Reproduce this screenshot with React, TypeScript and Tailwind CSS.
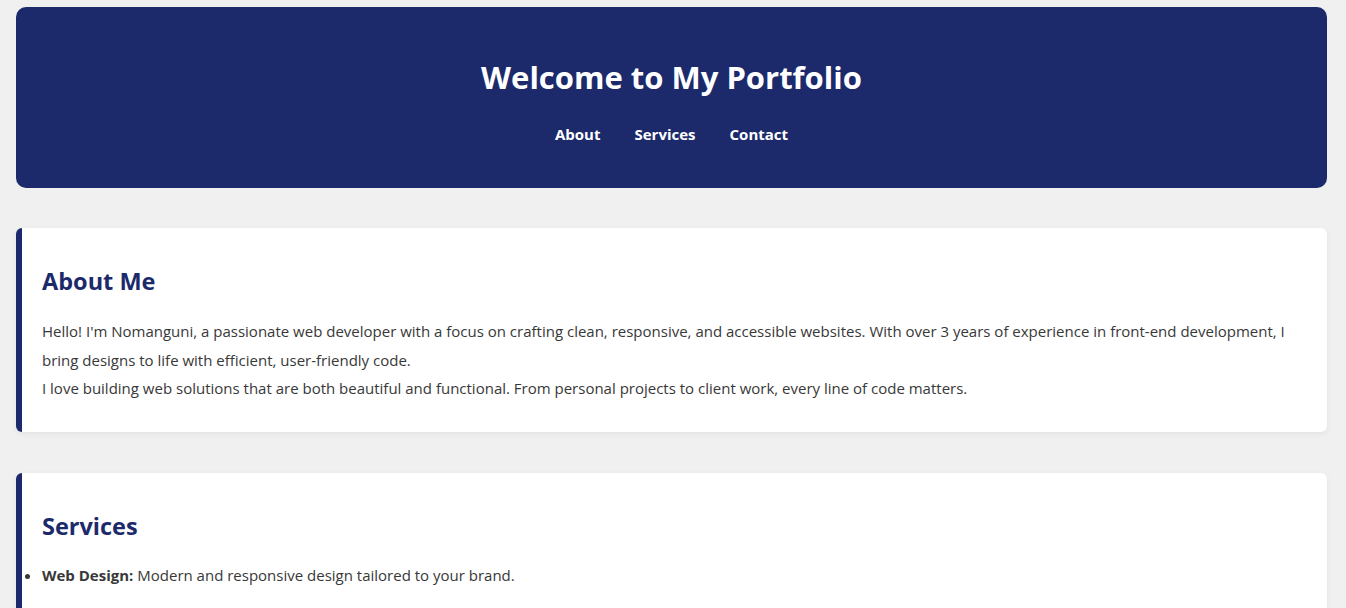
export default function App() {
  return (
    <div className="min-h-screen bg-[#f0f0f0] pl-4 pr-[19px] pt-[7px] pb-10 font-['Open_Sans',sans-serif] text-[#383838]">
      <header className="flex flex-col items-center rounded-[10px] bg-[#1c2a6c] pt-[50px] pb-[42px] text-white">
        <h1 className="text-[31px] font-bold leading-[40px]">Welcome to My Portfolio</h1>
        <nav className="mt-[25px] flex gap-[34px] text-[15px] font-bold leading-6">
          <a href="#about">About</a>
          <a href="#services">Services</a>
          <a href="#contact">Contact</a>
        </nav>
      </header>

      <section
        id="about"
        className="mt-10 rounded-md border-l-[6px] border-[#1c2a6c] bg-white pl-5 pr-5 pt-[37px] pb-[29px] shadow-[0_2px_6px_rgba(0,0,0,0.06)]"
      >
        <h2 className="text-[23.5px] font-bold leading-8 text-[#1c2a6c]">About Me</h2>
        <p className="mt-5 text-[15px] leading-[28.5px]">
          Hello! I'm Nomanguni, a passionate web developer with a focus on crafting clean, responsive, and accessible
          websites. With over 3 years of experience in front-end development, I bring designs to life with efficient,
          user-friendly code.
          <br />
          I love building web solutions that are both beautiful and functional. From personal projects to client work,
          every line of code matters.
        </p>
      </section>

      <section
        id="services"
        className="mt-[41px] rounded-md border-l-[6px] border-[#1c2a6c] bg-white pl-5 pr-5 pt-[37px] pb-[29px] shadow-[0_2px_6px_rgba(0,0,0,0.06)]"
      >
        <h2 className="text-[23.5px] font-bold leading-8 text-[#1c2a6c]">Services</h2>
        <ul className="mt-[19px] list-outside list-disc pl-0 text-[15px] leading-[28.5px]">
          <li>
            <strong>Web Design:</strong> Modern and responsive design tailored to your brand.
          </li>
        </ul>
      </section>
    </div>
  );
}
